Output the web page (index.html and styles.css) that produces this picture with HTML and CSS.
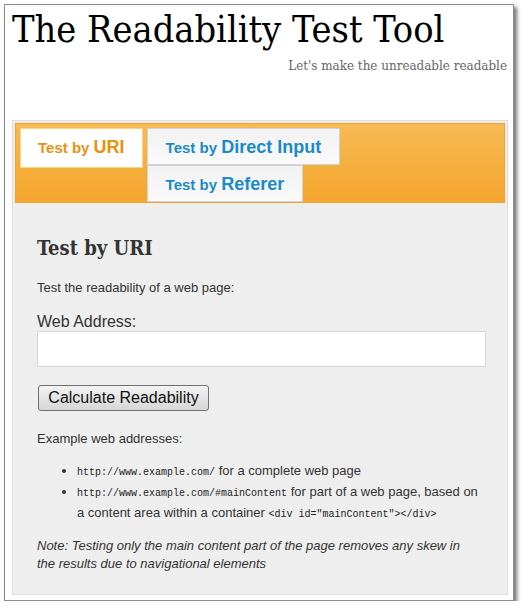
FILE: index.html
```html
<!DOCTYPE html>
<html lang="en">
<head>
  <meta charset="UTF-8" />
  <title>The Readability Test Tool</title>
  <link rel="stylesheet" href="styles.css">
</head>
<body>
  <div class="window">
    <div class="masthead">
      <h1>The Readability Test Tool</h1>
      <p class="tagline">Let's make the unreadable readable</p>
    </div>

    <div class="panel">
      <ul class="tabs">
        <li class="tab active">Test by <strong>URI</strong></li>
        <li class="tab">Test by <strong>Direct Input</strong></li>
        <li class="tab">Test by <strong>Referer</strong></li>
      </ul>

      <div class="content">
        <h2>Test by URI</h2>
        <p class="intro">Test the readability of a web page:</p>

        <form class="uri-form">
          <label for="uri">Web Address:</label>
          <input type="text" id="uri" name="uri">
          <button type="button">Calculate Readability</button>
        </form>

        <p>Example web addresses:</p>
        <ul class="examples">
          <li><code>http://www.example.com/</code> for a complete web page</li>
          <li><code>http://www.example.com/#mainContent</code> for part of a web page, based on a content area within a container <code>&lt;div id="mainContent"&gt;&lt;/div&gt;</code></li>
        </ul>

        <p class="note">Note: Testing only the main content part of the page removes any skew in the results due to navigational elements</p>
      </div>
    </div>
  </div>
</body>
</html>
```

FILE: styles.css
```css
* {
  box-sizing: border-box;
}
body {
  margin: 0;
  padding: 4px 0 0 4px;
  background: #fff;
  font-family: 'Liberation Sans', Arial, sans-serif;
  color: #333;
}
.window {
  width: 510px;
  height: 597px;
  background: #fff;
  border: 1px solid #8c8c8c;
  box-shadow: 3px 3px 4px rgba(0, 0, 0, 0.55);
}
.masthead {
  height: 115px;
  padding: 2px 6px 0 7px;
}
h1 {
  margin: 0;
  font-family: 'DejaVu Serif Condensed', 'DejaVu Serif', serif;
  font-stretch: condensed;
  font-weight: normal;
  font-size: 37.6px;
  line-height: 44px;
  color: #000;
}
.tagline {
  margin: 7px 0 0;
  text-align: right;
  font-family: 'DejaVu Serif Condensed', 'DejaVu Serif', serif;
  font-stretch: condensed;
  font-size: 13.3px;
  line-height: 15px;
  color: #666;
}
.panel {
  margin: 0 5px 0 7px;
  border: 1px solid #dedede;
  padding: 2px;
  background: #eee;
}
.tabs {
  list-style: none;
  margin: 0;
  padding: 4px 0 0 4px;
  display: grid;
  grid-template-columns: max-content max-content;
  column-gap: 4px;
  border: 1px solid #f0a232;
  background: linear-gradient(180deg, #f7b955 0%, #f5ad3a 60%, #f4a62e 100%);
}
.tab {
  height: 37px;
  padding: 8px 18px 0 18px;
  border: 1px solid #d2d2d2;
  background: linear-gradient(180deg, #f2f2f2 0%, #fafafa 100%);
  font-size: 15px;
  line-height: 20px;
  font-weight: bold;
  color: #1a8bc8;
  justify-self: start;
}
.tab strong {
  font-size: 18px;
}
.tab.active {
  grid-row: 1 / span 2;
  align-self: start;
  height: 40px;
  padding: 8px 17px 0 17px;
  background: #fff;
  border-color: #fbd67c;
  color: #eb900f;
}
.content {
  padding: 33px 24px 19px 22px;
}
h2 {
  margin: 0;
  font-family: 'DejaVu Serif Condensed', 'DejaVu Serif', serif;
  font-stretch: condensed;
  font-size: 20px;
  line-height: 24px;
  color: #333;
}
p {
  margin: 0;
  font-size: 13px;
  line-height: 18px;
}
.intro {
  margin-top: 19px;
}
.uri-form {
  margin-top: 16px;
}
label {
  display: block;
  font-size: 16px;
  line-height: 18px;
}
input[type="text"] {
  display: block;
  width: 449px;
  height: 36px;
  margin: 0;
  border: 1px solid #d6d6d6;
  background: #fff;
}
button {
  display: block;
  margin: 18px 0 19px 1px;
  width: 171px;
  height: 26px;
  padding: 0;
  border: 1px solid #707070;
  border-radius: 3px;
  background: linear-gradient(180deg, #f3f3f3 0%, #e4e4e4 50%, #d6d6d6 100%);
  font-family: 'Liberation Sans', Arial, sans-serif;
  font-size: 16px;
  color: #111;
}
.examples {
  margin: 12px 0 14px;
  padding-left: 40px;
  font-size: 13px;
  line-height: 21px;
}
code {
  font-family: 'Liberation Mono', 'Courier New', monospace;
  font-size: 10px;
  line-height: 1;
  color: #222;
}
.note {
  font-style: italic;
}
```
